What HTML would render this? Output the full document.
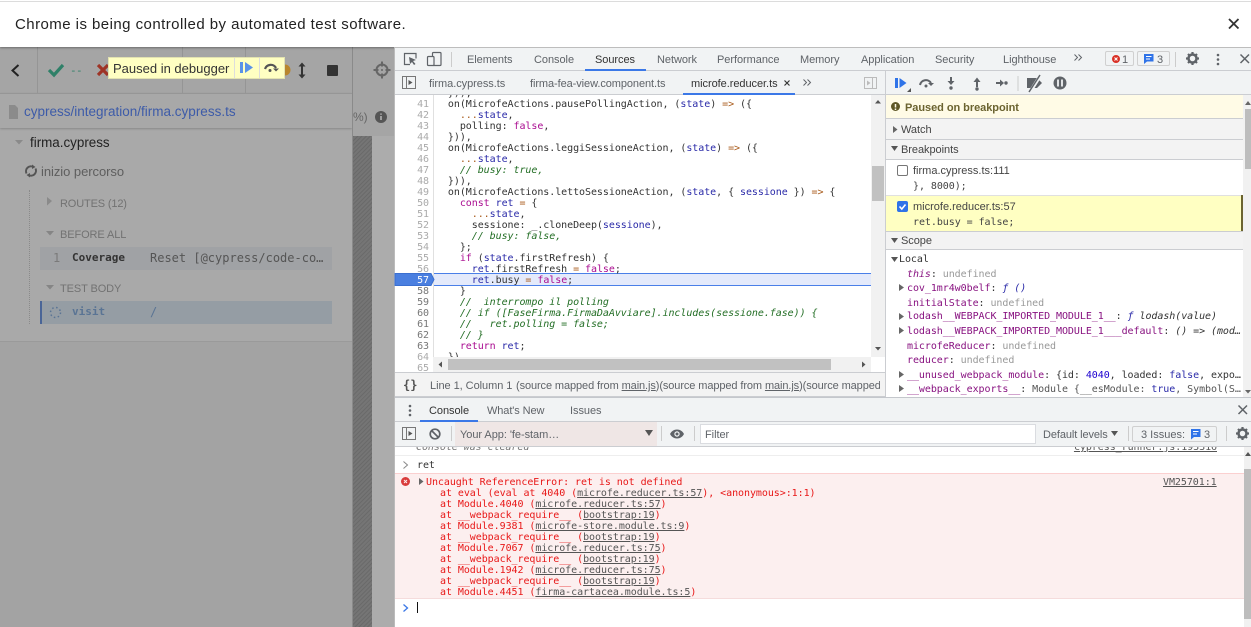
<!DOCTYPE html>
<html><head><meta charset="utf-8">
<style>
html,body{margin:0;padding:0;width:1251px;height:627px;overflow:hidden;background:#fff}
body{position:relative;font-family:"Liberation Sans",sans-serif;font-size:11px;color:#333}
.a,.t,.l,.n,.m{position:absolute;white-space:pre}
.a{display:block}
.t{color:#5f6368;font-size:11px;line-height:14px;margin-top:1px;letter-spacing:-.05px}
.l{font:10px/12px "DejaVu Sans Mono",monospace;left:436px;color:#333;letter-spacing:-.06px;margin-top:2px}
.n{font:10px/12px "DejaVu Sans Mono",monospace;color:#aaa;left:400px;width:29px;text-align:right;letter-spacing:-.06px;margin-top:2px}
.m{font:10px/12px "DejaVu Sans Mono",monospace;letter-spacing:-.06px;margin-top:1px}
.k{color:#aa0d91}.v{color:#2a2aa8}.c{color:#236e25;font-style:italic}.o{color:#a85a1a}
.p{color:#881280}.g{color:#999}
.r{color:#e81818}.u{color:#555;text-decoration:underline}
svg{position:absolute;overflow:visible}
</style></head><body>

<!-- left pane -->
<div class="a" style="left:0;top:47px;width:395px;height:580px;background:#a9a9a9"></div>
<div class="a" style="left:0;top:47px;width:352px;height:47px;background:#a5a5a5"></div>
<div class="a" style="left:0;top:93px;width:352px;height:35px;background:#a8a8a8;box-shadow:0 1px 2px rgba(0,0,0,.2)"></div>
<div class="a" style="left:0;top:93px;width:352px;height:1px;background:#969696"></div>
<div class="a" style="left:37px;top:47px;width:1px;height:46px;background:#959595"></div>
<div class="a" style="left:182px;top:47px;width:1px;height:46px;background:#959595"></div>
<div class="a" style="left:245px;top:47px;width:1px;height:46px;background:#959595"></div>
<div class="a" style="left:352px;top:47px;width:1px;height:580px;background:#8a8a8a"></div>
<div class="a" style="left:353px;top:136px;width:19px;height:491px;background:repeating-linear-gradient(135deg,#6a6a6a 0 1px,#757575 1px 3px)"></div>
<div class="a" style="left:353px;top:47px;width:42px;height:89px;background:#a5a5a5"></div>
<div class="a" style="left:372px;top:136px;width:23px;height:491px;background:#acacac"></div>
<div class="a" style="left:0;top:341px;width:352px;height:1px;background:#9a9a9a"></div>
<div class="a" style="left:0;top:342px;width:352px;height:285px;background:#a3a3a3"></div>

<svg style="left:0;top:47px" width="395" height="60">
<path d="M18.500 18l-6 5.500 6 5.500" fill="none" stroke="#222" stroke-width="2"/>
<path d="M49 23l5 5 9-10" fill="none" stroke="#2f8068" stroke-width="3.200"/>
<path d="M98 18l10 10M108 18l-10 10" stroke="#9e3426" stroke-width="3.200"/>
<circle cx="285" cy="23" r="5.500" fill="#b8862d"/>
<path d="M302 17v13" stroke="#333" stroke-width="2"/><path d="M298.500 19.500l3.500-4 3.500 4zM298.500 27.500l3.500 4 3.500-4z" fill="#333"/>
<rect x="327" y="18" width="11" height="11" rx="1" fill="#333"/>
<circle cx="382" cy="23" r="5.500" fill="none" stroke="#666" stroke-width="2"/><path d="M382 14.500v5M382 26.500v5M373.500 23h5M385.500 23h5" stroke="#666" stroke-width="2"/><circle cx="382" cy="23" r="1" fill="#666"/>
</svg>
<div class="m" style="left:70px;top:64px;color:#2f8068;font-size:11px;letter-spacing:-.6px">--</div>
<div class="a" style="left:108px;top:57px;width:177px;height:22px;background:#ffffc2;border:1px solid #e2e2b0;box-sizing:border-box"></div>
<div class="t" style="left:113px;top:59px;font-size:13px;line-height:17px;color:#333;letter-spacing:0">Paused in debugger</div>
<div class="a" style="left:234px;top:58px;width:1px;height:20px;background:#ddd"></div>
<div class="a" style="left:259px;top:58px;width:1px;height:20px;background:#ddd"></div>
<svg style="left:235px;top:58px" width="50" height="20">
<rect x="5" y="4" width="3" height="11" fill="#5a92e8"/><path d="M10 4l8 5.500-8 5.500z" fill="#5a92e8"/>
<path d="M30 11a6 6 0 0 1 11-1" fill="none" stroke="#555" stroke-width="2.200"/><path d="M38 10.500h6l-3 3z" fill="#555"/><circle cx="35" cy="12.500" r="1.500" fill="#555"/>
</svg>
<svg style="left:9px;top:105px" width="12" height="14"><path d="M0 0h6l3 3v11H0z" fill="#8b8b8b"/></svg>
<div class="t" style="left:24px;top:102px;font-size:13.500px;line-height:17px;color:#3d5ba8;letter-spacing:0">cypress/integration/firma.cypress.ts</div>
<div class="t" style="left:353px;top:109px;font-size:12px;color:#666">%)</div>
<svg style="left:375px;top:111px" width="12" height="12"><circle cx="6" cy="6" r="6" fill="#555"/><path d="M6 5v4M6 2.500v1.300" stroke="#a9a9a9" stroke-width="1.800"/></svg>

<svg style="left:15px;top:140px" width="10" height="6"><path d="M0 0h8l-4 4.500z" fill="#8a8a8a"/></svg>
<div class="t" style="left:30px;top:133px;font-size:13.400px;line-height:17px;color:#222;letter-spacing:0">firma.cypress</div>
<svg style="left:24px;top:164px" width="14" height="14"><path d="M2.500 9.500a5 5 0 0 1 7-6.500M11.500 4.500a5 5 0 0 1-7 6.500" fill="none" stroke="#555" stroke-width="2"/><path d="M8 .5l3.500 2.500-3.500 2zM6 13.500L2.500 11l3.500-2z" fill="#555"/></svg>
<div class="t" style="left:41px;top:162px;font-size:13px;line-height:17px;color:#5e5e5e;letter-spacing:-.05px">inizio percorso</div>
<div class="a" style="left:29px;top:190px;width:0;height:134px;border-left:1px dotted #8a8a8a"></div>
<svg style="left:47px;top:197px" width="6" height="10"><path d="M0 0l5 4-5 4.500z" fill="#8a8a8a"/></svg>
<div class="t" style="left:60px;top:196px;color:#727272;letter-spacing:-.15px">ROUTES (12)</div>
<svg style="left:46px;top:231px" width="10" height="6"><path d="M0 0h8l-4 4.500z" fill="#858585"/></svg>
<div class="t" style="left:60px;top:227px;color:#727272;letter-spacing:-.1px">BEFORE ALL</div>
<div class="a" style="left:40px;top:247px;width:292px;height:23px;background:#a0a2a5"></div>
<div class="m" style="left:53px;top:251px;color:#7a7a7a;font-size:12px;letter-spacing:0">1</div>
<div class="m" style="left:72px;top:251px;color:#333;font-weight:bold;font-size:11px;letter-spacing:0">Coverage</div>
<div class="m" style="left:150px;top:251px;color:#555;font-size:12px;letter-spacing:0">Reset [@cypress/code-co…</div>
<svg style="left:46px;top:285px" width="10" height="6"><path d="M0 0h8l-4 4.500z" fill="#858585"/></svg>
<div class="t" style="left:60px;top:281px;color:#727272;letter-spacing:-.1px">TEST BODY</div>
<div class="a" style="left:40px;top:301px;width:292px;height:23px;background:#959da4"></div>
<div class="a" style="left:40px;top:301px;width:2px;height:23px;background:#4a6597"></div>
<svg style="left:49px;top:306px" width="13" height="13"><circle cx="6.500" cy="6.500" r="5" fill="none" stroke="#5a7494" stroke-width="1.500" stroke-dasharray="1.500 2.500"/></svg>
<div class="m" style="left:72px;top:305px;color:#5a7494;font-weight:bold;font-size:11px;letter-spacing:0">visit</div>
<div class="m" style="left:150px;top:305px;color:#5a7494;font-size:12px;letter-spacing:0">/</div>

<!-- infobar -->
<div class="a" style="left:0;top:0;width:1251px;height:47px;background:#fff;box-shadow:0 1px 2px rgba(0,0,0,.35)"></div>
<div class="a" style="left:0;top:1px;width:1251px;height:1px;background:#dcdcdc"></div>
<div class="t" style="left:15px;top:15px;font-size:15px;line-height:18px;color:#222;letter-spacing:.45px">Chrome is being controlled by automated test software.</div>
<svg style="left:1228px;top:18px" width="12" height="12"><path d="M1 1l9.500 9.500M10.500 1L1 10.500" stroke="#333" stroke-width="1.800"/></svg>

<!-- devtools top tabs -->
<div class="a" style="left:395px;top:47px;width:856px;height:48px;background:#f1f3f4"></div>
<div class="a" style="left:395px;top:70px;width:856px;height:1px;background:#cbcdd1"></div>
<div class="a" style="left:395px;top:94px;width:856px;height:1px;background:#cbcdd1"></div>
<div class="a" style="left:394px;top:47px;width:1px;height:580px;background:#bbb"></div>
<div class="a" style="left:395px;top:47px;width:856px;height:1px;background:#bdbdbd"></div>
<svg style="left:395px;top:47px" width="60" height="24"><path d="M15 17.500H9.500v-11h11.500v5" fill="none" stroke="#5f6368" stroke-width="1.200"/><path d="M14 10l7 3-3 1 2.500 3-1.500 1-2-3-2 2z" fill="#5f6368"/><rect x="37.500" y="5.500" width="8.500" height="13" rx="1" fill="none" stroke="#5f6368" stroke-width="1.200"/><rect x="32.500" y="9.500" width="6.500" height="9" rx="1" fill="#f1f3f4" stroke="#5f6368" stroke-width="1.200"/></svg>
<div class="a" style="left:451px;top:52px;width:1px;height:15px;background:#ccc"></div>
<div class="t" style="left:467px;top:52px">Elements</div>
<div class="t" style="left:534px;top:52px">Console</div>
<div class="t" style="left:595px;top:52px;color:#333">Sources</div>
<div class="a" style="left:585px;top:69px;width:61px;height:2px;background:#3b78e7"></div>
<div class="t" style="left:657px;top:52px">Network</div>
<div class="t" style="left:717px;top:52px">Performance</div>
<div class="t" style="left:800px;top:52px">Memory</div>
<div class="t" style="left:861px;top:52px">Application</div>
<div class="t" style="left:935px;top:52px">Security</div>
<div class="t" style="left:1003px;top:52px">Lighthouse</div>
<svg style="left:1074px;top:54px" width="9" height="8"><path d="M.5.500l3 3-3 3M4.500.500l3 3-3 3" fill="none" stroke="#5f6368" stroke-width="1"/></svg>
<div class="a" style="left:1105px;top:51px;width:29px;height:15px;border:1px solid #d0d0d0;border-radius:2px;box-sizing:border-box"></div>
<svg style="left:1112px;top:55px" width="9" height="9"><circle cx="4" cy="4" r="4" fill="#d93025"/><path d="M2.500 2.500l3 3M5.500 2.500l-3 3" stroke="#fff"/></svg>
<div class="t" style="left:1122px;top:52px;color:#5f6368">1</div>
<div class="a" style="left:1137px;top:51px;width:33px;height:15px;border:1px solid #d0d0d0;border-radius:2px;box-sizing:border-box"></div>
<svg style="left:1144px;top:54px" width="10" height="10"><path d="M0 0h9.500v7.500H3L0 10z" fill="#2f73e8"/><path d="M2 2.500h5.500M2 5h4" stroke="#fff"/></svg>
<div class="t" style="left:1157px;top:52px;color:#5f6368">3</div>
<div class="a" style="left:1175px;top:52px;width:1px;height:15px;background:#ccc"></div>
<svg style="left:1186px;top:52px" width="14" height="14"><circle cx="6.500" cy="6.500" r="4" fill="none" stroke="#5f6368" stroke-width="2.500"/><path d="M6.500 0v2.500M6.500 10.500V13M0 6.500h2.500M10.500 6.500H13M2 2l1.500 1.500M9.500 9.500L11 11M2 11l1.500-1.500M9.500 3.500L11 2" stroke="#5f6368" stroke-width="2.200"/></svg>
<svg style="left:1216px;top:53px" width="5" height="13"><circle cx="2" cy="2" r="1.300" fill="#5f6368"/><circle cx="2" cy="6.500" r="1.300" fill="#5f6368"/><circle cx="2" cy="11" r="1.300" fill="#5f6368"/></svg>
<svg style="left:1240px;top:54px" width="10" height="10"><path d="M.5.500l8.500 8.500M9 .5L.5 9" stroke="#5f6368" stroke-width="1.500"/></svg>

<!-- file tabs -->
<svg style="left:402px;top:76px" width="14" height="14"><rect x=".5" y=".5" width="13" height="12" fill="none" stroke="#777"/><path d="M4.500.5v12" stroke="#777"/><path d="M6.500 4l4 2.500-4 2.500z" fill="#555"/></svg>
<div class="t" style="left:429px;top:76px">firma.cypress.ts</div>
<div class="t" style="left:530px;top:76px;letter-spacing:-.08px">firma-fea-view.component.ts</div>
<div class="t" style="left:691px;top:76px;color:#333">microfe.reducer.ts</div>
<svg style="left:784px;top:80px" width="7" height="7"><path d="M.5.500l5 5M5.500.5l-5 5" stroke="#333" stroke-width="1.200"/></svg>
<div class="a" style="left:683px;top:93px;width:112px;height:2px;background:#3b78e7"></div>
<svg style="left:803px;top:79px" width="9" height="8"><path d="M.5.500l3 3-3 3M4.500.500l3 3-3 3" fill="none" stroke="#5f6368" stroke-width="1"/></svg>
<svg style="left:864px;top:77px" width="13" height="12"><rect x=".5" y=".5" width="12" height="11" fill="#f1f3f4" stroke="#bbb"/><path d="M8.500.5v11" stroke="#bbb"/><path d="M3 3.500l3.500 2.500L3 8.500z" fill="#bbb"/></svg>

<!-- code editor -->
<div class="a" style="left:395px;top:95px;width:490px;height:278px;background:#fff;overflow:hidden"></div>
<div class="a" style="left:433px;top:95px;width:1px;height:278px;background:#e0e0e0"></div>
<div class="a" style="left:885px;top:71px;width:1px;height:326px;background:#cbcdd1"></div>
<div class="a" style="left:434px;top:273px;width:437px;height:13px;background:#e4eafb;border-top:1px solid #4a7fe8;border-bottom:1px solid #4a7fe8;box-sizing:border-box"></div>
<svg style="left:395px;top:273px" width="41" height="13"><path d="M0 .5h36l3 6-3 6H0z" fill="#4a7fe0" stroke="#3b6fd0"/></svg>

<div class="n" style="top:97px">41</div>
<div class="n" style="top:108px">42</div>
<div class="n" style="top:119px">43</div>
<div class="n" style="top:130px">44</div>
<div class="n" style="top:141px">45</div>
<div class="n" style="top:152px">46</div>
<div class="n" style="top:163px">47</div>
<div class="n" style="top:174px">48</div>
<div class="n" style="top:185px">49</div>
<div class="n" style="top:196px">50</div>
<div class="n" style="top:207px">51</div>
<div class="n" style="top:218px">52</div>
<div class="n" style="top:229px">53</div>
<div class="n" style="top:240px">54</div>
<div class="n" style="top:251px">55</div>
<div class="n" style="top:262px">56</div>
<div class="n" style="top:273px;color:#fff">57</div>
<div class="n" style="top:284px;color:#777">58</div>
<div class="n" style="top:295px;color:#777">59</div>
<div class="n" style="top:306px;color:#777">60</div>
<div class="n" style="top:317px;color:#777">61</div>
<div class="n" style="top:328px;color:#777">62</div>
<div class="n" style="top:339px;color:#777">63</div>
<div class="n" style="top:350px">64</div>
<div class="n" style="top:361px">65</div>

<div class="l" style="top:86px;clip-path:inset(7px 0 0 0)">  })),</div>
<div class="l" style="top:97px">  on(MicrofeActions.pausePollingAction, (<span class="v">state</span>) <span class="o">=&gt;</span> ({</div>
<div class="l" style="top:108px">    <span class="o">...</span><span class="v">state</span>,</div>
<div class="l" style="top:119px">    polling: <span class="k">false</span>,</div>
<div class="l" style="top:130px">  })),</div>
<div class="l" style="top:141px">  on(MicrofeActions.leggiSessioneAction, (<span class="v">state</span>) <span class="o">=&gt;</span> ({</div>
<div class="l" style="top:152px">    <span class="o">...</span><span class="v">state</span>,</div>
<div class="l" style="top:163px">    <span class="c">// busy: true,</span></div>
<div class="l" style="top:174px">  })),</div>
<div class="l" style="top:185px">  on(MicrofeActions.lettoSessioneAction, (<span class="v">state</span>, { <span class="v">sessione</span> }) <span class="o">=&gt;</span> {</div>
<div class="l" style="top:196px">    <span class="k">const</span> <span class="v">ret</span> <span class="o">=</span> {</div>
<div class="l" style="top:207px">      <span class="o">...</span><span class="v">state</span>,</div>
<div class="l" style="top:218px">      sessione: _.cloneDeep(<span class="v">sessione</span>),</div>
<div class="l" style="top:229px">      <span class="c">// busy: false,</span></div>
<div class="l" style="top:240px">    };</div>
<div class="l" style="top:251px">    <span class="k">if</span> (<span class="v">state</span>.firstRefresh) {</div>
<div class="l" style="top:262px">      <span class="v">ret</span>.firstRefresh <span class="o">=</span> <span class="k">false</span>;</div>
<div class="l" style="top:273px">      <span class="v">ret</span>.busy <span class="o">=</span> <span class="k">false</span>;</div>
<div class="l" style="top:284px">    }</div>
<div class="l" style="top:295px">    <span class="c">//  interrompo il polling</span></div>
<div class="l" style="top:306px">    <span class="c">// if ([FaseFirma.FirmaDaAvviare].includes(sessione.fase)) {</span></div>
<div class="l" style="top:317px">    <span class="c">//   ret.polling = false;</span></div>
<div class="l" style="top:328px">    <span class="c">// }</span></div>
<div class="l" style="top:339px">    <span class="k">return</span> <span class="v">ret</span>;</div>
<div class="l" style="top:350px">  }),</div>

<div class="a" style="left:871px;top:95px;width:14px;height:262px;background:#f1f1f1"></div>
<div class="a" style="left:872px;top:166px;width:12px;height:35px;background:#c1c1c1"></div>
<svg style="left:871px;top:95px" width="14" height="262"><path d="M4 8.500h6l-3-3.500zM4 252h6l-3 3.500z" fill="#555"/></svg>
<div class="a" style="left:433px;top:357px;width:438px;height:15px;background:#f1f1f1"></div>
<div class="a" style="left:448px;top:359px;width:383px;height:11px;background:#c1c1c1"></div>
<svg style="left:433px;top:357px" width="438" height="15"><path d="M9 4.500v6l-3.500-3zM429 4.500v6l3.500-3z" fill="#555"/></svg>

<!-- footer -->
<div class="a" style="left:395px;top:372px;width:490px;height:25px;background:#f3f3f3;border-top:1px solid #cbcdd1;border-bottom:1px solid #cbcdd1;box-sizing:border-box"></div>
<div class="m" style="left:403px;top:378px;font-size:12px;font-weight:bold;color:#555;letter-spacing:0">{}</div>
<div class="t" style="left:430px;top:378px">Line 1, Column 1</div>
<div class="t" style="left:516px;top:378px;width:364px;overflow:hidden;letter-spacing:-.1px">(source mapped from <u>main.js</u>)(source mapped from <u>main.js</u>)(source mapped</div>

<!-- sidebar -->
<div class="a" style="left:886px;top:71px;width:365px;height:326px;background:#fff"></div>
<div class="a" style="left:886px;top:71px;width:365px;height:24px;background:#f1f3f4;border-bottom:1px solid #cbcdd1;box-sizing:border-box"></div>
<svg style="left:886px;top:71px" width="190" height="24">
<rect x="9" y="7" width="3" height="10" fill="#2f73e8"/><path d="M13.500 7l7 5-7 5z" fill="#2f73e8"/><path d="M21 21h4v-4z" fill="#555"/>
<path d="M34 14a6 6 0 0 1 11-2" fill="none" stroke="#5f6368" stroke-width="2"/><path d="M42 12h6l-3 3z" fill="#5f6368"/><circle cx="40" cy="15" r="1.500" fill="#5f6368"/>
<path d="M65 6v6" stroke="#5f6368" stroke-width="2"/><path d="M61.500 10h7L65 14z" fill="#5f6368"/><circle cx="65" cy="17" r="1.700" fill="#5f6368"/>
<path d="M91 10v6" stroke="#5f6368" stroke-width="2"/><path d="M87.500 11h7L91 6.500z" fill="#5f6368"/><circle cx="91" cy="18" r="1.700" fill="#5f6368"/>
<path d="M110 12h6" stroke="#5f6368" stroke-width="2"/><path d="M114 8.500v7l4-3.500z" fill="#5f6368"/><circle cx="120" cy="12" r="1.700" fill="#5f6368"/>
<path d="M132 5v15" stroke="#ccc"/>
<path d="M141 7h10l5 5-5 5h-10z" fill="#5f6368"/><path d="M155 3.500L144 21" stroke="#f1f3f4" stroke-width="3.500"/><path d="M154 4L143 21" stroke="#5f6368" stroke-width="1.500"/>
<circle cx="174" cy="12" r="6.500" fill="#5f6368"/><path d="M172 8.500v7M176 8.500v7" stroke="#f1f3f4" stroke-width="1.800"/>
</svg>
<div class="a" style="left:886px;top:95px;width:358px;height:24px;background:#fffbe6;border-bottom:1px solid #cbcdd1;box-sizing:border-box"></div>
<svg style="left:891px;top:102px" width="10" height="10"><circle cx="4.500" cy="4.500" r="4.500" fill="#5e5726"/><path d="M4.500 2v3.500M4.500 6.500V8" stroke="#fffbe6" stroke-width="1.500"/></svg>
<div class="t" style="left:905px;top:100px;color:#6b6330;font-weight:bold">Paused on breakpoint</div>
<div class="a" style="left:886px;top:119px;width:358px;height:21px;background:#f3f3f3;border-bottom:1px solid #cbcdd1;box-sizing:border-box"></div>
<svg style="left:893px;top:126px" width="6" height="8"><path d="M0 0l4.500 3.500L0 7z" fill="#666"/></svg>
<div class="t" style="left:901px;top:122px;color:#444">Watch</div>
<div class="a" style="left:886px;top:140px;width:358px;height:20px;background:#f3f3f3;border-bottom:1px solid #cbcdd1;box-sizing:border-box"></div>
<svg style="left:891px;top:146px" width="8" height="6"><path d="M0 0h7l-3.500 5z" fill="#555"/></svg>
<div class="t" style="left:901px;top:142px;color:#444">Breakpoints</div>

<div class="a" style="left:897px;top:165px;width:11px;height:11px;border:1px solid #767676;border-radius:2px;box-sizing:border-box;background:#fff"></div>
<div class="t" style="left:913px;top:163px;color:#444;letter-spacing:0">firma.cypress.ts:111</div>
<div class="m" style="left:913px;top:180px;color:#444">}, 8000);</div>
<div class="a" style="left:886px;top:195px;width:357px;height:36px;background:#ffffc2;border-top:1px solid #e0e0e0;box-sizing:border-box"></div>
<div class="a" style="left:1241px;top:195px;width:2px;height:36px;background:#6b6330"></div>
<svg style="left:897px;top:201px" width="11" height="11"><rect width="11" height="11" rx="2" fill="#2f73e8"/><path d="M2.500 5.500l2.300 2.500 3.700-4.500" fill="none" stroke="#fff" stroke-width="1.600"/></svg>
<div class="t" style="left:913px;top:199px;color:#444;letter-spacing:0">microfe.reducer.ts:57</div>
<div class="m" style="left:913px;top:216px;color:#444">ret.busy = false;</div>

<div class="a" style="left:886px;top:231px;width:358px;height:19px;background:#f3f3f3;border-top:1px solid #cbcdd1;border-bottom:1px solid #cbcdd1;box-sizing:border-box"></div>
<svg style="left:891px;top:238px" width="8" height="6"><path d="M0 0h7l-3.500 5z" fill="#555"/></svg>
<div class="t" style="left:901px;top:233px;color:#444">Scope</div>

<svg style="left:891px;top:257px" width="8" height="6"><path d="M0 0h7l-3.500 5z" fill="#555"/></svg>
<div class="m" style="left:899px;top:253px;color:#333">Local</div>
<div class="m" style="left:907px;top:268px"><span class="p" style="font-style:italic">this</span>: <span class="g">undefined</span></div>
<svg style="left:899px;top:284px" width="6" height="8"><path d="M0 0l5 3.500L0 7z" fill="#666"/></svg>
<div class="m" style="left:907px;top:282px"><span class="p">cov_1mr4w0belf</span>: <i style="color:#2a2aa8">ƒ ()</i></div>
<div class="m" style="left:907px;top:297px"><span class="p">initialState</span>: <span class="g">undefined</span></div>
<svg style="left:899px;top:313px" width="6" height="8"><path d="M0 0l5 3.500L0 7z" fill="#666"/></svg>
<div class="m" style="left:907px;top:310px"><span class="p">lodash__WEBPACK_IMPORTED_MODULE_1__</span>: <i style="color:#2a2aa8">ƒ</i> <i>lodash(value)</i></div>
<svg style="left:899px;top:327px" width="6" height="8"><path d="M0 0l5 3.500L0 7z" fill="#666"/></svg>
<div class="m" style="left:907px;top:325px;width:335px;overflow:hidden"><span class="p">lodash__WEBPACK_IMPORTED_MODULE_1___default</span>: <i>() =&gt; (mod…</i></div>
<div class="m" style="left:907px;top:340px"><span class="p">microfeReducer</span>: <span class="g">undefined</span></div>
<div class="m" style="left:907px;top:354px"><span class="p">reducer</span>: <span class="g">undefined</span></div>
<svg style="left:899px;top:371px" width="6" height="8"><path d="M0 0l5 3.500L0 7z" fill="#666"/></svg>
<div class="m" style="left:907px;top:369px"><span class="p">__unused_webpack_module</span>: {id: <span style="color:#1c00cf">4040</span>, loaded: <span class="k" style="color:#2a2aa8">false</span>, expo…</div>
<svg style="left:899px;top:385px" width="6" height="8"><path d="M0 0l5 3.500L0 7z" fill="#666"/></svg>
<div class="m" style="left:907px;top:383px"><span class="p">__webpack_exports__</span>: <span style="color:#555">Module {__esModule: <span style="color:#2a2aa8">true</span>, Symbol(S…</span></div>

<div class="a" style="left:1243px;top:95px;width:8px;height:302px;background:#f1f1f1"></div>
<div class="a" style="left:1245px;top:109px;width:6px;height:60px;background:#bdbdbd"></div>
<svg style="left:1243px;top:95px" width="8" height="302"><path d="M2 10h6l-3-4zM2 295h6l-3 3.500z" fill="#666"/></svg>

<!-- drawer -->
<div class="a" style="left:395px;top:397px;width:856px;height:50px;background:#f1f3f4"></div>
<div class="a" style="left:395px;top:397px;width:856px;height:1px;background:#c4c7cc"></div>
<div class="a" style="left:395px;top:421px;width:856px;height:1px;background:#cbcdd1"></div>
<div class="a" style="left:395px;top:446px;width:856px;height:1px;background:#cbcdd1"></div>
<svg style="left:408px;top:404px" width="5" height="13"><circle cx="2" cy="2" r="1.300" fill="#5f6368"/><circle cx="2" cy="6.500" r="1.300" fill="#5f6368"/><circle cx="2" cy="11" r="1.300" fill="#5f6368"/></svg>
<div class="t" style="left:429px;top:403px;color:#333">Console</div>
<div class="a" style="left:420px;top:420px;width:58px;height:2px;background:#3b78e7"></div>
<div class="t" style="left:487px;top:403px;letter-spacing:-.1px">What's New</div>
<div class="t" style="left:570px;top:403px">Issues</div>
<svg style="left:1238px;top:405px" width="10" height="10"><path d="M.5.500l8.500 8.500M9 .5L.5 9" stroke="#5f6368" stroke-width="1.500"/></svg>

<svg style="left:402px;top:427px" width="14" height="14"><rect x=".5" y=".5" width="13" height="12" fill="none" stroke="#777"/><path d="M4.500.5v12" stroke="#777"/><path d="M6.500 4l4 2.500-4 2.500z" fill="#555"/></svg>
<svg style="left:429px;top:428px" width="12" height="12"><circle cx="6" cy="6" r="4.800" fill="none" stroke="#5f6368" stroke-width="1.700"/><path d="M2.500 2.500l7 7" stroke="#5f6368" stroke-width="1.700"/></svg>
<div class="a" style="left:451px;top:426px;width:1px;height:15px;background:#ccc"></div>
<div class="a" style="left:455px;top:422px;width:202px;height:24px;background:#efe6e5"></div>
<div class="t" style="left:460px;top:427px">Your App: 'fe-stam…</div>
<svg style="left:645px;top:430px" width="9" height="7"><path d="M0 0h8l-4 6z" fill="#555"/></svg>
<div class="a" style="left:661px;top:426px;width:1px;height:15px;background:#ccc"></div>
<svg style="left:670px;top:429px" width="15" height="10"><path d="M0 5c3-6 11-6 14 0-3 6-11 6-14 0z" fill="#5f6368"/><circle cx="7" cy="5" r="2.700" fill="#f1f3f4"/><circle cx="7" cy="5" r="1.500" fill="#5f6368"/></svg>
<div class="a" style="left:694px;top:426px;width:1px;height:15px;background:#ccc"></div>
<div class="a" style="left:700px;top:424px;width:336px;height:20px;background:#fff;border:1px solid #dadce0;box-sizing:border-box"></div>
<div class="t" style="left:705px;top:427px">Filter</div>
<div class="t" style="left:1043px;top:427px;letter-spacing:-.1px">Default levels</div>
<svg style="left:1111px;top:431px" width="9" height="7"><path d="M0 0h7l-3.500 5z" fill="#555"/></svg>
<div class="a" style="left:1128px;top:426px;width:1px;height:15px;background:#ccc"></div>
<div class="a" style="left:1132px;top:426px;width:85px;height:16px;border:1px solid #d0d0d0;border-radius:2px;box-sizing:border-box"></div>
<div class="t" style="left:1141px;top:427px;letter-spacing:0">3 Issues:</div>
<svg style="left:1191px;top:429px" width="10" height="11"><path d="M0 0h9.500v8H3L0 10.500z" fill="#2f73e8"/><path d="M2 2.500h5.500M2 5h4" stroke="#fff"/></svg>
<div class="t" style="left:1204px;top:427px">3</div>
<div class="a" style="left:1226px;top:426px;width:1px;height:15px;background:#ccc"></div>
<svg style="left:1236px;top:427px" width="14" height="14"><circle cx="6.500" cy="6.500" r="4" fill="none" stroke="#5f6368" stroke-width="2.500"/><path d="M6.500 0v2.500M6.500 10.500V13M0 6.500h2.500M10.500 6.500H13M2 2l1.500 1.500M9.500 9.500L11 11M2 11l1.500-1.500M9.500 3.500L11 2" stroke="#5f6368" stroke-width="2.200"/></svg>

<!-- console -->
<div class="a" style="left:395px;top:447px;width:856px;height:180px;background:#fff;overflow:hidden">
<div class="m" style="left:21px;top:-6px;color:#777;font-style:italic">Console was cleared</div>
<div class="m u" style="right:34px;top:-6px">cypress_runner.js:193316</div>
</div>
<div class="a" style="left:395px;top:455px;width:849px;height:1px;background:#eee"></div>
<svg style="left:403px;top:461px" width="6" height="9"><path d="M.5.500l4 3.500-4 3.500" fill="none" stroke="#888"/></svg>
<div class="m" style="left:417px;top:459px;color:#333">ret</div>

<div class="a" style="left:395px;top:473px;width:849px;height:126px;background:#fcefef;border-top:1px solid #fbd0d0;border-bottom:1px solid #f5dcdc;box-sizing:border-box"></div>
<svg style="left:401px;top:477px" width="9" height="9"><circle cx="4.500" cy="4.500" r="4.500" fill="#d93c3c"/><path d="M3 3l3 3M6 3L3 6" stroke="#fcefef"/></svg>
<svg style="left:419px;top:478px" width="5" height="8"><path d="M0 0l4.500 3.500L0 7z" fill="#666"/></svg>
<div class="m r" style="left:426px;top:476px">Uncaught ReferenceError: ret is not defined</div>
<div class="m u" style="left:1163px;top:476px">VM25701:1</div>
<div class="m r" style="left:440px;top:487px">at eval (eval at 4040 (<span class="u">microfe.reducer.ts:57</span>), &lt;anonymous&gt;:1:1)</div>
<div class="m r" style="left:440px;top:498px">at Module.4040 (<span class="u">microfe.reducer.ts:57</span>)</div>
<div class="m r" style="left:440px;top:509px">at __webpack_require__ (<span class="u">bootstrap:19</span>)</div>
<div class="m r" style="left:440px;top:520px">at Module.9381 (<span class="u">microfe-store.module.ts:9</span>)</div>
<div class="m r" style="left:440px;top:531px">at __webpack_require__ (<span class="u">bootstrap:19</span>)</div>
<div class="m r" style="left:440px;top:542px">at Module.7067 (<span class="u">microfe.reducer.ts:75</span>)</div>
<div class="m r" style="left:440px;top:553px">at __webpack_require__ (<span class="u">bootstrap:19</span>)</div>
<div class="m r" style="left:440px;top:564px">at Module.1942 (<span class="u">microfe.reducer.ts:75</span>)</div>
<div class="m r" style="left:440px;top:575px">at __webpack_require__ (<span class="u">bootstrap:19</span>)</div>
<div class="m r" style="left:440px;top:586px">at Module.4451 (<span class="u">firma-cartacea.module.ts:5</span>)</div>

<svg style="left:403px;top:604px" width="6" height="9"><path d="M.5.500l4 3.500-4 3.500" fill="none" stroke="#3b78e7" stroke-width="1.300"/></svg>
<div class="a" style="left:417px;top:602px;width:1px;height:11px;background:#111"></div>

<div class="a" style="left:1244px;top:447px;width:7px;height:180px;background:#f1f1f1"></div>
<div class="a" style="left:1244px;top:469px;width:7px;height:150px;background:#bdbdbd"></div>
<svg style="left:1244px;top:447px" width="7" height="20"><path d="M1 9h6l-3-4z" fill="#555"/></svg>
</body></html>
